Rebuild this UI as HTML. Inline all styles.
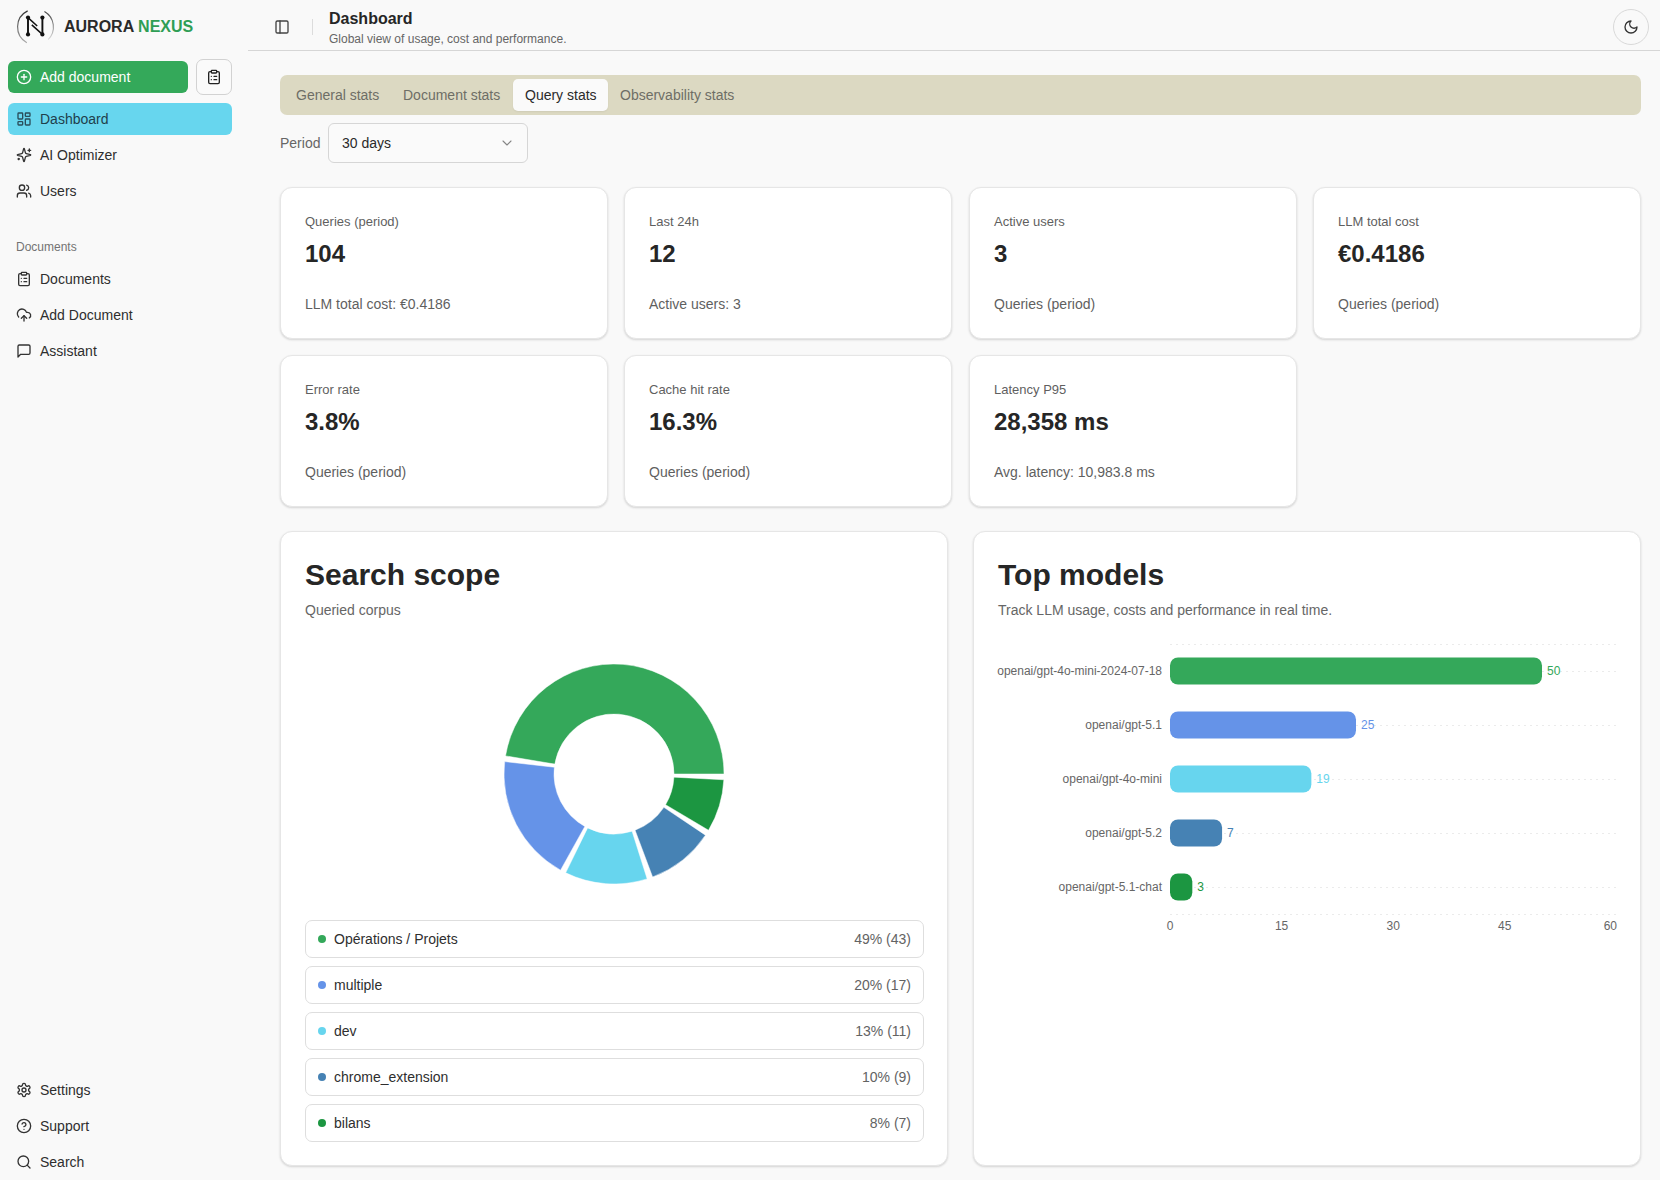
<!DOCTYPE html>
<html><head><meta charset="utf-8">
<style>
*{box-sizing:border-box;margin:0;padding:0}
html,body{width:1660px;height:1180px;overflow:hidden}
body{background:#f9f9f9;font-family:"Liberation Sans",sans-serif;color:#2b2b2b;position:relative}
.abs{position:absolute}
svg.i{position:absolute;width:16px;height:16px;fill:none;stroke:currentColor;stroke-width:2;stroke-linecap:round;stroke-linejoin:round}
.nav{position:absolute;white-space:nowrap;left:8px;width:224px;height:32px;border-radius:6px;font-size:14px;line-height:32px;color:#2e2e2e}
.nav svg.i{left:8px;top:8px;color:#333}
.nav span{position:absolute;left:32px;top:0}
.hdr{position:absolute;left:248px;top:0;width:1412px;height:51px;border-bottom:1px solid #d6d6d6}
.tabs{position:absolute;left:280px;top:75px;width:1361px;height:40px;background:#dcd9c2;border-radius:7px}
.tab{position:absolute;white-space:nowrap;top:4px;height:32px;line-height:32px;font-size:14px;color:#6e6e66;padding:0 12px;border-radius:5px}
.tab.on{background:#fafafa;color:#2a2a2a;box-shadow:0 1px 2px rgba(0,0,0,.06)}
.card{position:absolute;background:#fff;border:1px solid #e6e6e6;border-radius:12px;box-shadow:0 1px 2px rgba(0,0,0,.10),0 1px 3px rgba(0,0,0,.06)}
.stat{width:328px;height:152px;padding:24px}
.stat .l{font-size:13px;line-height:20px;color:#5f5f5f}
.stat .v{font-size:24px;line-height:32px;font-weight:700;color:#262626;margin-top:6px}
.stat .f{font-size:14px;line-height:20px;color:#5f5f5f;margin-top:24px}
.big{width:668px;height:635px;padding:24px}
.big h2{font-size:30px;line-height:36px;position:relative;top:1px;font-weight:700;color:#262626}
.big .sub{font-size:14px;line-height:20px;color:#666;margin-top:8px}
.leg{position:absolute;left:24px;width:619px;height:38px;border:1px solid #dedede;border-radius:7px;font-size:14px;line-height:36px;color:#2e2e2e}
.leg i{position:absolute;left:12px;top:14px;width:8px;height:8px;border-radius:50%}
.leg span{position:absolute;left:28px}
.leg b{position:absolute;right:12px;font-weight:400;color:#636363}
</style></head><body>

<!-- SIDEBAR -->
<svg class="abs" style="left:12px;top:4px" width="48" height="44" viewBox="0 0 48 44">
  <defs><linearGradient id="lg1" x1="0" y1="0" x2="0" y2="1"><stop offset="0" stop-color="#333"/><stop offset="1" stop-color="#aaa"/></linearGradient>
  <linearGradient id="lg2" x1="0" y1="0" x2="0" y2="1"><stop offset="0" stop-color="#444"/><stop offset="1" stop-color="#ddd"/></linearGradient></defs>
  <path d="M15.65,6.91 A17.9,17.9 0 0 0 14.82,38.66" fill="none" stroke="url(#lg1)" stroke-width="1.2"/>
  <path d="M32.45,7.5 A17.9,17.9 0 0 1 36.16,35.66" fill="none" stroke="url(#lg2)" stroke-width="1.1"/>
  <path d="M16 13.6V30.4M30.4 13.6V30.4" fill="none" stroke="#111" stroke-width="1.9"/>
  <path d="M16 13.6L25.2 22M19.8 20.9L30.4 30.4" fill="none" stroke="#111" stroke-width="1.5"/>
  <circle cx="16" cy="13.6" r="2.1" fill="#111"/><circle cx="30.4" cy="13.6" r="2.1" fill="#111"/>
  <circle cx="16" cy="30.4" r="2.1" fill="#111"/><circle cx="30.4" cy="30.4" r="2.1" fill="#111"/>
</svg>
<div class="abs" style="left:64px;top:17px;font-size:16px;line-height:20px;font-weight:700;color:#2a2a2a">AURORA <span style="color:#2f9e55">NEXUS</span></div>

<div class="abs" style="left:8px;top:61px;width:180px;height:32px;background:#34a95a;border-radius:6px;color:#fff;font-size:14px;line-height:32px">
  <svg class="i" style="left:8px;top:8px;color:#fff" viewBox="0 0 24 24"><circle cx="12" cy="12" r="10"/><path d="M8 12h8"/><path d="M12 8v8"/></svg>
  <span class="abs" style="left:32px;top:0">Add document</span>
</div>
<div class="abs" style="left:196px;top:59px;width:36px;height:36px;border:1px solid #d2d2d2;border-radius:7px;background:#fafafa">
  <svg class="i" style="left:9px;top:9px;color:#222" viewBox="0 0 24 24"><rect width="8" height="4" x="8" y="2" rx="1" ry="1"/><path d="M16 4h2a2 2 0 0 1 2 2v14a2 2 0 0 1-2 2H6a2 2 0 0 1-2-2V6a2 2 0 0 1 2-2h2"/><path d="M12 11h4"/><path d="M12 16h4"/><path d="M8 11h.01"/><path d="M8 16h.01"/></svg>
</div>

<div class="nav" style="top:103px;background:#67d6ee;color:#1f3f4c">
  <svg class="i" style="color:#2a4d5a" viewBox="0 0 24 24"><rect width="7" height="9" x="3" y="3" rx="1"/><rect width="7" height="5" x="14" y="3" rx="1"/><rect width="7" height="9" x="14" y="12" rx="1"/><rect width="7" height="5" x="3" y="16" rx="1"/></svg>
  <span>Dashboard</span>
</div>
<div class="nav" style="top:139px">
  <svg class="i" viewBox="0 0 24 24"><path d="M9.937 15.5A2 2 0 0 0 8.5 14.063l-6.135-1.582a.5.5 0 0 1 0-.962L8.5 9.936A2 2 0 0 0 9.937 8.5l1.582-6.135a.5.5 0 0 1 .963 0L14.063 8.5A2 2 0 0 0 15.5 9.937l6.135 1.581a.5.5 0 0 1 0 .964L15.5 14.063a2 2 0 0 0-1.437 1.437l-1.582 6.135a.5.5 0 0 1-.963 0z"/><path d="M20 3v4"/><path d="M22 5h-4"/><path d="M4 17v2"/><path d="M5 18H3"/></svg>
  <span>AI Optimizer</span>
</div>
<div class="nav" style="top:175px">
  <svg class="i" viewBox="0 0 24 24"><path d="M16 21v-2a4 4 0 0 0-4-4H6a4 4 0 0 0-4 4v2"/><circle cx="9" cy="7" r="4"/><path d="M22 21v-2a4 4 0 0 0-3-3.87"/><path d="M16 3.13a4 4 0 0 1 0 7.75"/></svg>
  <span>Users</span>
</div>

<div class="abs" style="left:16px;top:239px;font-size:12px;line-height:16px;color:#737373">Documents</div>

<div class="nav" style="top:263px">
  <svg class="i" viewBox="0 0 24 24"><rect width="8" height="4" x="8" y="2" rx="1" ry="1"/><path d="M16 4h2a2 2 0 0 1 2 2v14a2 2 0 0 1-2 2H6a2 2 0 0 1-2-2V6a2 2 0 0 1 2-2h2"/><path d="M12 11h4"/><path d="M12 16h4"/><path d="M8 11h.01"/><path d="M8 16h.01"/></svg>
  <span>Documents</span>
</div>
<div class="nav" style="top:299px">
  <svg class="i" viewBox="0 0 24 24"><path d="M12 13v8"/><path d="M4 14.899A7 7 0 1 1 15.71 8h1.79a4.5 4.5 0 0 1 2.5 8.242"/><path d="m8 17 4-4 4 4"/></svg>
  <span>Add Document</span>
</div>
<div class="nav" style="top:335px">
  <svg class="i" viewBox="0 0 24 24"><path d="M21 15a2 2 0 0 1-2 2H7l-4 4V5a2 2 0 0 1 2-2h14a2 2 0 0 1 2 2z"/></svg>
  <span>Assistant</span>
</div>

<div class="nav" style="top:1074px">
  <svg class="i" viewBox="0 0 24 24"><path d="M12.22 2h-.44a2 2 0 0 0-2 2v.18a2 2 0 0 1-1 1.73l-.43.25a2 2 0 0 1-2 0l-.15-.08a2 2 0 0 0-2.73.73l-.22.38a2 2 0 0 0 .73 2.730l.15.1a2 2 0 0 1 1 1.72v.51a2 2 0 0 1-1 1.74l-.15.09a2 2 0 0 0-.73 2.73l.22.38a2 2 0 0 0 2.73.73l.15-.08a2 2 0 0 1 2 0l.43.25a2 2 0 0 1 1 1.73V20a2 2 0 0 0 2 2h.44a2 2 0 0 0 2-2v-.18a2 2 0 0 1 1-1.73l.43-.25a2 2 0 0 1 2 0l.15.08a2 2 0 0 0 2.73-.73l.22-.39a2 2 0 0 0-.73-2.73l-.15-.08a2 2 0 0 1-1-1.74v-.5a2 2 0 0 1 1-1.74l.15-.09a2 2 0 0 0 .73-2.73l-.22-.38a2 2 0 0 0-2.730-.73l-.15.08a2 2 0 0 1-2 0l-.43-.25a2 2 0 0 1-1-1.73V4a2 2 0 0 0-2-2z"/><circle cx="12" cy="12" r="3"/></svg>
  <span>Settings</span>
</div>
<div class="nav" style="top:1110px">
  <svg class="i" viewBox="0 0 24 24"><circle cx="12" cy="12" r="10"/><path d="M9.09 9a3 3 0 0 1 5.83 1c0 2-3 3-3 3"/><path d="M12 17h.01"/></svg>
  <span>Support</span>
</div>
<div class="nav" style="top:1146px">
  <svg class="i" viewBox="0 0 24 24"><circle cx="11" cy="11" r="8"/><path d="m21 21-4.3-4.3"/></svg>
  <span>Search</span>
</div>

<!-- HEADER -->
<div class="hdr"></div>
<svg class="i" style="left:274px;top:19px;color:#444" viewBox="0 0 24 24"><rect width="18" height="18" x="3" y="3" rx="2"/><path d="M9 3v18"/></svg>
<div class="abs" style="left:312px;top:19px;width:1px;height:16px;background:#dcdcdc"></div>
<div class="abs" style="left:329px;top:9px;font-size:16px;line-height:20px;font-weight:700;color:#262626">Dashboard</div>
<div class="abs" style="left:329px;top:31px;font-size:12px;line-height:16px;color:#666">Global view of usage, cost and performance.</div>
<div class="abs" style="left:1613px;top:9px;width:36px;height:36px;border:1px solid #d9d9d9;border-radius:50%"></div>
<svg class="i" style="left:1623px;top:19px;color:#333" viewBox="0 0 24 24"><path d="M12 3a6 6 0 0 0 9 9 9 9 0 1 1-9-9Z"/></svg>

<!-- TABS -->
<div class="tabs">
  <div class="tab" style="left:4px">General stats</div>
  <div class="tab" style="left:111px">Document stats</div>
  <div class="tab on" style="left:233px;width:95px">Query stats</div>
  <div class="tab" style="left:328px">Observability stats</div>
</div>

<div class="abs" style="left:280px;top:133px;font-size:14px;line-height:20px;color:#666">Period</div>
<div class="abs" style="left:328px;top:123px;width:200px;height:40px;border:1px solid #d6d6d6;border-radius:6px;background:#fafafa">
  <span class="abs" style="left:13px;top:9px;font-size:14px;line-height:20px;color:#2a2a2a">30 days</span>
  <svg class="i" style="left:170px;top:11px;color:#858585;width:16px;height:16px;stroke-width:1.6" viewBox="0 0 24 24"><path d="m6 9 6 6 6-6"/></svg>
</div>

<!-- STAT CARDS -->
<div class="card stat" style="left:280px;top:187px"><div class="l">Queries (period)</div><div class="v">104</div><div class="f">LLM total cost: €0.4186</div></div>
<div class="card stat" style="left:624px;top:187px"><div class="l">Last 24h</div><div class="v">12</div><div class="f">Active users: 3</div></div>
<div class="card stat" style="left:969px;top:187px"><div class="l">Active users</div><div class="v">3</div><div class="f">Queries (period)</div></div>
<div class="card stat" style="left:1313px;top:187px"><div class="l">LLM total cost</div><div class="v">€0.4186</div><div class="f">Queries (period)</div></div>
<div class="card stat" style="left:280px;top:355px"><div class="l">Error rate</div><div class="v">3.8%</div><div class="f">Queries (period)</div></div>
<div class="card stat" style="left:624px;top:355px"><div class="l">Cache hit rate</div><div class="v">16.3%</div><div class="f">Queries (period)</div></div>
<div class="card stat" style="left:969px;top:355px"><div class="l">Latency P95</div><div class="v">28,358 ms</div><div class="f">Avg. latency: 10,983.8 ms</div></div>

<!-- SEARCH SCOPE -->
<div class="card big" style="left:280px;top:531px">
  <h2>Search scope</h2>
  <div class="sub">Queried corpus</div>
  <svg id="donut" class="abs" style="left:0;top:0" width="668" height="635"><path d="M443.00,242.00A110,110 0 0 0 224.50,223.88L273.82,232.11A60,60 0 0 1 393.00,242.00Z" fill="#34a85a" stroke="#fff" stroke-width="0.5"/><path d="M223.70,229.58A110,110 0 0 0 279.56,338.14L303.85,294.44A60,60 0 0 1 273.38,235.23Z" fill="#6593e8" stroke="#fff" stroke-width="0.5"/><path d="M284.66,340.81A110,110 0 0 0 366.17,346.88L351.09,299.21A60,60 0 0 1 306.63,295.90Z" fill="#67d5ee" stroke="#fff" stroke-width="0.5"/><path d="M371.62,345.00A110,110 0 0 0 424.45,303.13L382.88,275.34A60,60 0 0 1 354.06,298.18Z" fill="#4682b4" stroke="#fff" stroke-width="0.5"/><path d="M427.53,298.26A110,110 0 0 0 442.85,247.76L392.92,245.14A60,60 0 0 1 384.56,272.69Z" fill="#1c9641" stroke="#fff" stroke-width="0.5"/></svg>
  <div class="leg" style="top:388px"><i style="background:#34a85a"></i><span>Opérations / Projets</span><b>49% (43)</b></div>
  <div class="leg" style="top:434px"><i style="background:#6593e8"></i><span>multiple</span><b>20% (17)</b></div>
  <div class="leg" style="top:480px"><i style="background:#67d5ee"></i><span>dev</span><b>13% (11)</b></div>
  <div class="leg" style="top:526px"><i style="background:#4682b4"></i><span>chrome_extension</span><b>10% (9)</b></div>
  <div class="leg" style="top:572px"><i style="background:#1c9641"></i><span>bilans</span><b>8% (7)</b></div>
</div>

<!-- TOP MODELS -->
<div class="card big" style="left:973px;top:531px">
  <h2>Top models</h2>
  <div class="sub">Track LLM usage, costs and performance in real time.</div>
  <svg id="bars" class="abs" style="left:0;top:0" width="668" height="635"><line x1="196" x2="642.4" y1="112.5" y2="112.5" stroke="#ebebeb" stroke-dasharray="2 4"/><line x1="196" x2="642.4" y1="139.5" y2="139.5" stroke="#ebebeb" stroke-dasharray="2 4"/><line x1="196" x2="642.4" y1="193.5" y2="193.5" stroke="#ebebeb" stroke-dasharray="2 4"/><line x1="196" x2="642.4" y1="247.5" y2="247.5" stroke="#ebebeb" stroke-dasharray="2 4"/><line x1="196" x2="642.4" y1="301.5" y2="301.5" stroke="#ebebeb" stroke-dasharray="2 4"/><line x1="196" x2="642.4" y1="355.5" y2="355.5" stroke="#ebebeb" stroke-dasharray="2 4"/><line x1="196" x2="642.4" y1="382.5" y2="382.5" stroke="#ebebeb" stroke-dasharray="2 4"/><rect x="196" y="125.5" width="372.00" height="27" rx="8" fill="#34a85a"/><text x="188" y="143" text-anchor="end" font-size="12" fill="#666">openai/gpt-4o-mini-2024-07-18</text><text x="573.00" y="143" font-size="12" fill="#34a85a">50</text><rect x="196" y="179.5" width="186.00" height="27" rx="8" fill="#6593e8"/><text x="188" y="197" text-anchor="end" font-size="12" fill="#666">openai/gpt-5.1</text><text x="387.00" y="197" font-size="12" fill="#6593e8">25</text><rect x="196" y="233.5" width="141.36" height="27" rx="8" fill="#67d5ee"/><text x="188" y="251" text-anchor="end" font-size="12" fill="#666">openai/gpt-4o-mini</text><text x="342.36" y="251" font-size="12" fill="#67d5ee">19</text><rect x="196" y="287.5" width="52.08" height="27" rx="8" fill="#4682b4"/><text x="188" y="305" text-anchor="end" font-size="12" fill="#666">openai/gpt-5.2</text><text x="253.08" y="305" font-size="12" fill="#4682b4">7</text><rect x="196" y="341.5" width="22.32" height="27" rx="8" fill="#1c9641"/><text x="188" y="359" text-anchor="end" font-size="12" fill="#666">openai/gpt-5.1-chat</text><text x="223.32" y="359" font-size="12" fill="#1c9641">3</text><text x="196.00" y="397.6" text-anchor="middle" font-size="12" fill="#666">0</text><text x="307.60" y="397.6" text-anchor="middle" font-size="12" fill="#666">15</text><text x="419.20" y="397.6" text-anchor="middle" font-size="12" fill="#666">30</text><text x="530.80" y="397.6" text-anchor="middle" font-size="12" fill="#666">45</text><text x="643.00" y="397.6" text-anchor="end" font-size="12" fill="#666">60</text></svg>
</div>

</body></html>
